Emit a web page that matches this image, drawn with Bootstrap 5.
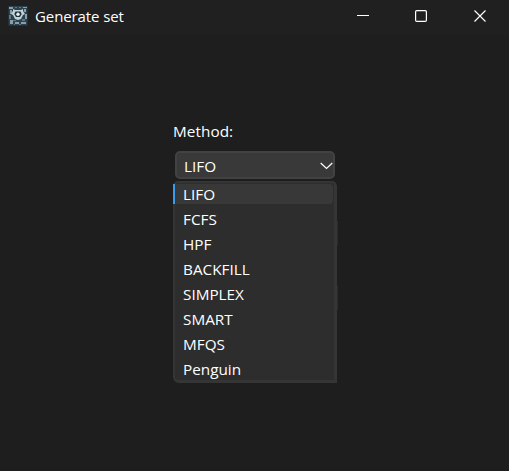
<!DOCTYPE html>
<html lang="en" data-bs-theme="dark">
<head>
<meta charset="utf-8">
<meta name="viewport" content="width=device-width, initial-scale=1">
<title>Generate set</title>
<link href="https://cdn.jsdelivr.net/npm/bootstrap@5.3.0/dist/css/bootstrap.min.css" rel="stylesheet">
<style>
body{background:#1e1e1e;color:#fff;font-family:"Open Sans","Noto Sans",sans-serif;font-size:15.3px;line-height:25px;height:471px;overflow:hidden}
.titlebar{height:35px;background:#202020;padding-left:8px}
.app-icon{margin-top:6px}
.app-title{font-size:15px;margin-left:7px;line-height:32px;white-space:nowrap;letter-spacing:-.1px}
.win-btn{width:58.5px;height:32px;border:0;background:none;color:#fff}
.form-area{width:166px;margin:84px 0 0 173px}
.method-label{height:25px;margin-bottom:7px;letter-spacing:.05px}
.combo{width:160px;height:28px;margin-left:2px;background:#393939;border:2px solid #424242;border-radius:5px;padding:2px 0 0 7px;line-height:22px}
.popup{width:164px;height:202px;margin-top:2px;background:#2d2d2d;border:2px solid #353535;border-right-width:3px;border-bottom-width:3px;border-radius:5px 5px 0 6px}
.option{height:25px;padding-left:8px;line-height:25px}
.option.chosen{height:20px;line-height:21px;margin:1px 1px 3px -2px;background:#383838;border-left:2px solid #3a9bea;border-radius:0 4px 4px 0}
.slivers{padding-top:42px;gap:41px}
.sliver{width:1px;height:24px;background:#2c2c2c}
</style>
<script src="https://cdn.jsdelivr.net/npm/bootstrap@5.3.0/dist/js/bootstrap.bundle.min.js"></script>
</head>
<body>
<header class="titlebar d-flex align-items-start">
  <svg class="app-icon flex-shrink-0" width="20" height="20" viewBox="0 0 20 20" aria-hidden="true">
    <rect x=".5" width="19" height="19.5" fill="#2b4350"/>
    <path d="M1 1h4v2H1zM2 4h2v4H2zM15 1h4v1h-4zM16 3h2v3h-2zM2 14h3v4H2zM7 16h4v2H7zM13 16h5v2h-5zM17 8h2v5h-2z" fill="#8b9ea6"/>
    <path d="M1 9h2v4H1zM7 1h2v1H7zM11 1h2v1h-2zM5 14h3v1H5zM14 13h3v2h-3zM6 18h1v1H6zM11 18h2v1h-2z" fill="#5d7682"/>
    <path d="M5 3l2 1h6l2-1v2l2 3-2 1-2 4-3 1-3-1-2-4-2-1 2-3z" fill="#c5d2d4"/>
    <path d="M7.5 5.5h5l1.2 2.5-1.7 3h-4L6.3 8z" fill="#193542"/>
    <circle cx="10" cy="8.2" r="1.7" fill="#e9efee"/>
  </svg>
  <span class="app-title">Generate set</span>
  <div class="d-flex ms-auto">
    <button class="win-btn d-flex align-items-center justify-content-center p-0" aria-label="Minimize"><svg width="12" height="12"><path d="M0 5.5h12" stroke="#fff"/></svg></button>
    <button class="win-btn d-flex align-items-center justify-content-center p-0" aria-label="Maximize"><svg width="12" height="12"><rect x=".6" y=".6" width="10.8" height="10.8" rx="1.2" fill="none" stroke="#fff" stroke-width="1.2"/></svg></button>
    <button class="win-btn d-flex align-items-center justify-content-center p-0" aria-label="Close"><svg width="12" height="12"><path d="M.5.5l11 11M11.5.5l-11 11" stroke="#fff" stroke-width="1.15"/></svg></button>
  </div>
</header>
<main class="form-area">
  <div class="method-label">Method:</div>
  <div class="combo d-flex align-items-center justify-content-between">
    <span>LIFO</span>
    <svg width="13" height="8" viewBox="0 0 13 8"><path d="M.7 1l5.8 5.5L12.3 1" fill="none" stroke="#fff" stroke-width="1.2"/></svg>
  </div>
  <div class="d-flex">
    <div class="popup">
      <div class="option chosen">LIFO</div>
      <div class="option">FCFS</div>
      <div class="option">HPF</div>
      <div class="option">BACKFILL</div>
      <div class="option">SIMPLEX</div>
      <div class="option">SMART</div>
      <div class="option">MFQS</div>
      <div class="option">Penguin</div>
    </div>
    <div class="slivers d-flex flex-column">
      <div class="sliver"></div>
      <div class="sliver"></div>
    </div>
  </div>
</main>
</body>
</html>
